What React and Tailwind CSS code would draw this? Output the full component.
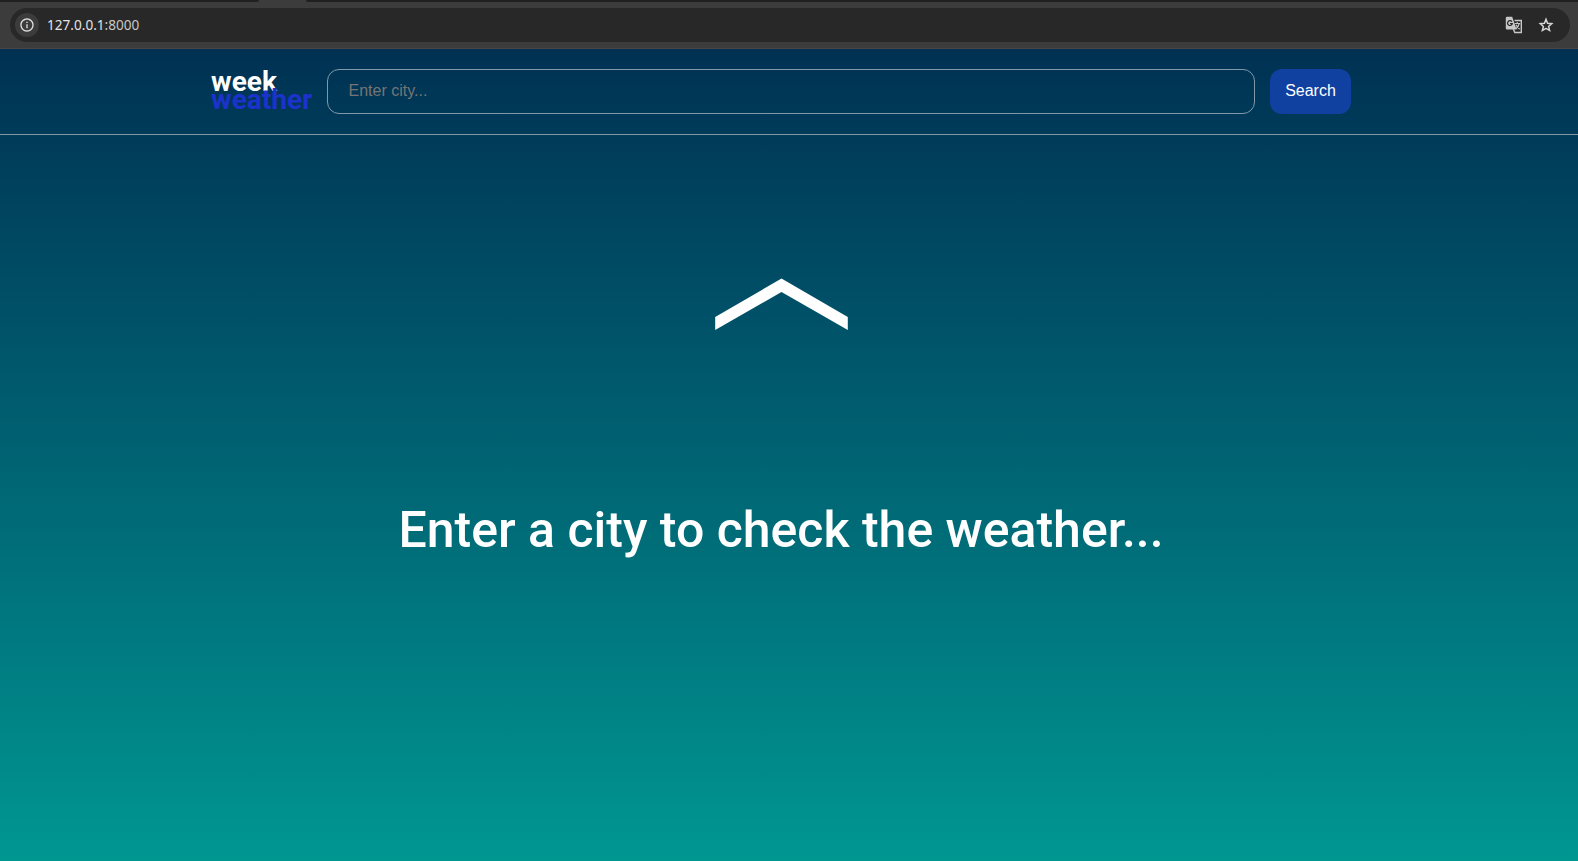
import { MdInfoOutline } from "react-icons/md";

function TranslateIcon() {
  return (
    <svg viewBox="0 0 18 18" className="mr-[14px] size-[18px]">
      <path d="M9.5 4.5h6.8v12H9.8L8.3 13" fill="none" stroke="#c7c7c7" strokeWidth="1.4" />
      <path d="M2 .8h5.2l1 3 3.4 9.6H2a1.2 1.2 0 0 1-1.2-1.2V2A1.2 1.2 0 0 1 2 .8Z" fill="#c7c7c7" />
      <path d="M6.9 5.7A2.4 2.4 0 1 0 7.3 7.6H5.1" fill="none" stroke="#282828" strokeWidth="1.2" />
      <path d="M9.7 7.5h5.4M12.3 6.2v1.3M14.2 7.7c-.5 2.2-1.6 3.8-3.2 5.1M11 8.8c.8 1.5 2 2.9 3.6 4.4" fill="none" stroke="#c7c7c7" strokeWidth="1.2" />
    </svg>
  );
}

function StarIcon() {
  return (
    <svg viewBox="0 0 24 24" className="size-[18px]" fill="none" stroke="#d5d5d5" strokeWidth="2">
      <path d="m12 4.5 2.1 5.2 5.6.5-4.2 3.7 1.3 5.5-4.8-2.9-4.8 2.9 1.3-5.5-4.2-3.7 5.6-.5Z" />
    </svg>
  );
}

function BrowserBar() {
  return (
    <div className="flex h-[49px] shrink-0 flex-col border-b border-[#4a4644] bg-[#3c3c3c]">
      <div className="flex h-0.5 justify-between bg-[#3c3c3c]">
        <div className="w-[259px] rounded-br-sm bg-[#202020]" />
        <div className="w-[1272px] rounded-bl-sm bg-[#202020]" />
      </div>
      <div className="mt-1.5 ml-2.5 flex h-[34px] w-[1560px] items-center rounded-full bg-[#282828] pr-[15px] pl-[5px]">
        <div className="flex size-6 items-center justify-center rounded-full bg-[#3c3c3c]">
          <MdInfoOutline className="size-4 text-[#dedede]" />
        </div>
        <span className="ml-[8px] flex-1 font-['Noto_Sans',sans-serif] text-[13.6px] leading-5 text-[#c7c7c7]">
          <span className="text-[#e3e3e3]">127.0.0.1</span>:8000
        </span>
        <TranslateIcon />
        <StarIcon />
      </div>
    </div>
  );
}

function Header() {
  return (
    <header className="h-[86px] border-b border-[#8099a9] pt-5">
      <div className="flex h-[45px] w-[1561px] justify-center gap-[15px]">
        <div className="w-[101px] pt-1 pl-[0.6px] font-[Roboto,sans-serif] text-[28px] leading-[18px] font-bold text-white">
          <div>week</div>
          <div className="text-[#1b33cc]">weather</div>
        </div>
        <input
          placeholder="Enter city..."
          className="w-[928px] rounded-xl border border-[#8099a9] bg-transparent px-[21px] pb-0.5 font-['Liberation_Sans',Arial,sans-serif] text-base text-white placeholder:text-[#757575]"
        />
        <button className="w-[81px] rounded-xl bg-[#1041a0] pb-0.5 pl-px font-['Liberation_Sans',Arial,sans-serif] text-base text-white">
          Search
        </button>
      </div>
    </header>
  );
}

export default function App() {
  return (
    <div className="flex h-screen flex-col overflow-hidden">
      <BrowserBar />
      <div className="flex-1 bg-linear-to-b from-[#003153] to-[#009791]">
        <Header />
        <main className="flex w-[1562px] flex-col items-center pt-[143px]">
          <svg viewBox="0 0 134 53" className="h-[53px] w-[134px] fill-white">
            <path d="M67.5 0.5 133.8 39v13L67.5 14 1.2 52V39Z" />
          </svg>
          <h1 className="mt-[170px] font-[Roboto,sans-serif] text-[50px] leading-[59px] font-medium text-white">
            Enter a city to check the weather...
          </h1>
        </main>
      </div>
    </div>
  );
}
